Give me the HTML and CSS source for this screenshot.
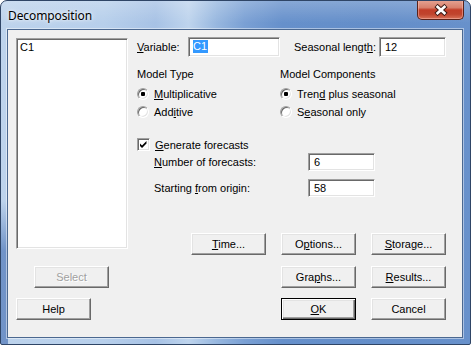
FILE: index.html
```html
<!DOCTYPE html>
<html>
<head>
<meta charset="utf-8">
<title>Decomposition</title>
<link rel="stylesheet" href="styles.css">
</head>
<body>
<div class="window">
  <div class="titlebar">
    <span class="title">Decomposition</span>
    <div class="close">
      <svg width="47" height="20" viewBox="0 0 47 20">
        <path d="M19 5.5 L29 14.5 M29 5.5 L19 14.5" stroke="#3b1a15" stroke-width="4.6" fill="none"/>
        <path d="M19.6 6 L28.4 14 M28.4 6 L19.6 14" stroke="#ffffff" stroke-width="2.6" fill="none"/>
      </svg>
    </div>
  </div>
  <div class="client">
    <div class="left">
      <div class="listbox"><div class="item">C1</div></div>
      <button class="btn select" disabled>Select</button>
      <button class="btn help">Help</button>
    </div>
    <div class="right">
      <div class="row1">
        <span class="lbl var"><u>V</u>ariable:</span>
        <div class="edit w92"><span class="sel">C1</span></div>
        <span class="lbl seas">Seasonal lengt<u>h</u>:</span>
        <div class="edit w67">12</div>
      </div>
      <div class="groups">
        <div class="group g1">
          <div class="heading">Model Type</div>
          <div class="opt"><span class="radio on"></span><span><u>M</u>ultiplicative</span></div>
          <div class="opt"><span class="radio"></span><span>Add<u>i</u>tive</span></div>
        </div>
        <div class="group">
          <div class="heading">Model Components</div>
          <div class="opt"><span class="radio on"></span><span>Tren<u>d</u> plus seasonal</span></div>
          <div class="opt"><span class="radio"></span><span>S<u>e</u>asonal only</span></div>
        </div>
      </div>
      <div class="check-row">
        <span class="checkbox">
          <svg width="9" height="9" viewBox="0 0 9 9"><path d="M1 3.5 L3 5.5 L7.5 1 L7.5 3.5 L3 8 L1 6 Z" fill="#000"/></svg>
        </span>
        <span><u>G</u>enerate forecasts</span>
      </div>
      <div class="field-row first">
        <span class="flabel"><u>N</u>umber of forecasts:</span>
        <div class="edit w67 short">6</div>
      </div>
      <div class="field-row">
        <span class="flabel">Starting <u>f</u>rom origin:</span>
        <div class="edit w67 short">58</div>
      </div>
      <div class="buttons">
        <button class="btn c1 r1"><u>T</u>ime...</button>
        <button class="btn c2 r1">O<u>p</u>tions...</button>
        <button class="btn c3 r1"><u>S</u>torage...</button>
        <button class="btn c2 r2">Gra<u>p</u>hs...</button>
        <button class="btn c3 r2"><u>R</u>esults...</button>
        <button class="btn default c2 r3"><u>O</u>K</button>
        <button class="btn c3 r3">Cancel</button>
      </div>
    </div>
  </div>
</div>
</body>
</html>
```

FILE: styles.css
```css
html, body {
  margin: 0;
  padding: 0;
  background: #ffffff;
}

.window {
  position: relative;
  width: 471px;
  height: 345px;
  box-sizing: border-box;
  border: 1px solid #2f4566;
  border-radius: 7px 7px 2px 2px;
  padding: 0 7px 6px 6px;
  display: flex;
  flex-direction: column;
  background:
    linear-gradient(180deg, rgba(60,100,170,0) 0, rgba(60,100,170,0) 200px, rgba(50,95,170,0.55) 250px) left top / 7px 100% no-repeat,
    linear-gradient(180deg, rgba(255,255,255,0.22) 0, rgba(255,255,255,0) 22px),
    linear-gradient(90deg, #bdd3ec 0%, #b7cfeb 22%, #a7c2e5 33%, #bed4ed 40%, #97b7df 46%, #7aa0d4 52%, #6690cb 60%, #648ec9 80%, #6891cb 100%);
  overflow: hidden;
}

.titlebar {
  height: 28px;
  display: flex;
  align-items: center;
  padding-left: 1px;
  flex: none;
}

.title {
  font-family: "Noto Sans", "Liberation Sans", sans-serif;
  font-size: 12px;
  color: #000;
  text-shadow: 0 0 6px rgba(255,255,255,0.9), 0 0 3px rgba(255,255,255,0.8);
  letter-spacing: -0.1px;
}

.close {
  position: absolute;
  top: -1px;
  right: 6px;
  width: 47px;
  height: 20px;
  box-sizing: border-box;
  border: 1px solid #5a2219;
  border-top: none;
  border-radius: 0 0 5px 5px;
  background: linear-gradient(180deg, #e6a595 0%, #d8806c 40%, #c23e28 52%, #c0442d 75%, #d87258 100%);
  box-shadow: inset 0 0 0 1px rgba(255,200,190,0.45);
}

.close svg {
  display: block;
  position: absolute;
  left: -1px;
  top: 0;
}

.client {
  height: 309px;
  box-sizing: border-box;
  border: 1px solid #4b6890;
  box-shadow: 0 0 0 1px rgba(255,255,255,0.45);
  background: #f0f0f0;
  display: flex;
  padding: 7px 16px 0 8px;
  font-family: "Liberation Sans", Arial, sans-serif;
  font-size: 11px;
  color: #000;
}

.left {
  width: 112px;
  display: flex;
  flex-direction: column;
  align-items: flex-start;
  flex: none;
}

.listbox {
  margin-top: 1px;
  width: 112px;
  height: 211px;
  box-sizing: border-box;
  background: #fff;
  border: 1px solid;
  border-color: #a0a0a0 #ffffff #ffffff #a0a0a0;
  box-shadow: inset 1px 1px 0 #696969, inset -1px -1px 0 #e3e3e3;
  padding: 2px 0 0 3px;
}

.item {
  line-height: 13px;
}

.btn {
  width: 75px;
  height: 22px;
  box-sizing: border-box;
  padding: 0;
  margin: 0;
  font-family: "Liberation Sans", Arial, sans-serif;
  font-size: 11px;
  color: #000;
  background: #f0f0f0;
  border: 1px solid;
  border-color: #ffffff #696969 #696969 #ffffff;
  box-shadow: inset -1px -1px 0 #a0a0a0, inset 1px 1px 0 #e3e3e3;
  border-radius: 0;
  line-height: 18px;
}

.btn u {
  text-underline-offset: 1px;
}

.btn.default {
  border: 1px solid #000;
  box-shadow: inset 1px 1px 0 #ffffff, inset -1px -1px 0 #696969, inset -2px -2px 0 #a0a0a0, inset 2px 2px 0 #e3e3e3;
}

.btn.select {
  margin-top: 17px;
  margin-left: 18px;
  color: #a0a0a0;
  text-shadow: 1px 1px 0 #ffffff;
}

.btn.help {
  margin-top: 10px;
}

.right {
  margin-left: 9px;
  width: 309px;
  flex: none;
  display: flex;
  flex-direction: column;
}

.row1 {
  display: flex;
  align-items: center;
  height: 20px;
}

.lbl.var {
  width: 51px;
}

.lbl.seas {
  margin-left: 14px;
  width: 85px;
  white-space: nowrap;
}

.edit {
  height: 20px;
  box-sizing: border-box;
  background: #fff;
  border: 1px solid;
  border-color: #a0a0a0 #ffffff #ffffff #a0a0a0;
  box-shadow: inset 1px 1px 0 #696969, inset -1px -1px 0 #e3e3e3;
  padding: 1px 0 0 5px;
  line-height: 16px;
  flex: none;
}

.edit.short {
  height: 18px;
  line-height: 14px;
}

.w92 { width: 92px; padding-left: 4px; }
.w67 { width: 67px; }

.sel {
  display: inline-block;
  background: #3399ff;
  color: #fff;
  line-height: 13px;
  padding: 0 1px 0 0;
  vertical-align: top;
  margin-top: 1px;
}

.groups {
  display: flex;
  margin-top: 11px;
}

.group.g1 {
  width: 143px;
}

.heading {
  line-height: 13px;
  margin-bottom: 4px;
}

.opt {
  display: flex;
  align-items: center;
  height: 18px;
}

.radio {
  width: 12px;
  height: 12px;
  box-sizing: border-box;
  border-radius: 50%;
  background: #fff;
  border: 1px solid;
  border-color: #a0a0a0 #ffffff #ffffff #a0a0a0;
  box-shadow: inset 1px 1px 0 #696969, inset -1px -1px 0 #e3e3e3;
  margin-right: 5px;
  display: flex;
  align-items: center;
  justify-content: center;
  flex: none;
}

.radio.on::after {
  content: "";
  width: 4px;
  height: 4px;
  border-radius: 1px;
  background: #000;
}

.check-row {
  display: flex;
  align-items: center;
  height: 13px;
  margin-top: 17px;
}

.checkbox {
  width: 13px;
  height: 13px;
  box-sizing: border-box;
  background: #fff;
  border: 1px solid;
  border-color: #a0a0a0 #ffffff #ffffff #a0a0a0;
  box-shadow: inset 1px 1px 0 #696969, inset -1px -1px 0 #e3e3e3;
  margin-right: 5px;
  padding: 1px 0 0 1px;
  flex: none;
}

.checkbox svg {
  display: block;
}

.field-row {
  display: flex;
  align-items: center;
  height: 18px;
  margin-top: 8px;
}

.field-row.first {
  margin-top: 2px;
}

.flabel {
  width: 171px;
  padding-left: 17px;
  box-sizing: border-box;
  margin-top: -1px;
}

.buttons {
  margin-top: 36px;
  display: grid;
  grid-template-columns: 75px 75px 75px;
  grid-template-rows: 33px 32px 22px;
  column-gap: 15px;
  justify-content: end;
  align-items: start;
}

.c1 { grid-column: 1; }
.c2 { grid-column: 2; }
.c3 { grid-column: 3; }
.r1 { grid-row: 1; }
.r2 { grid-row: 2; }
.r3 { grid-row: 3; }
```
